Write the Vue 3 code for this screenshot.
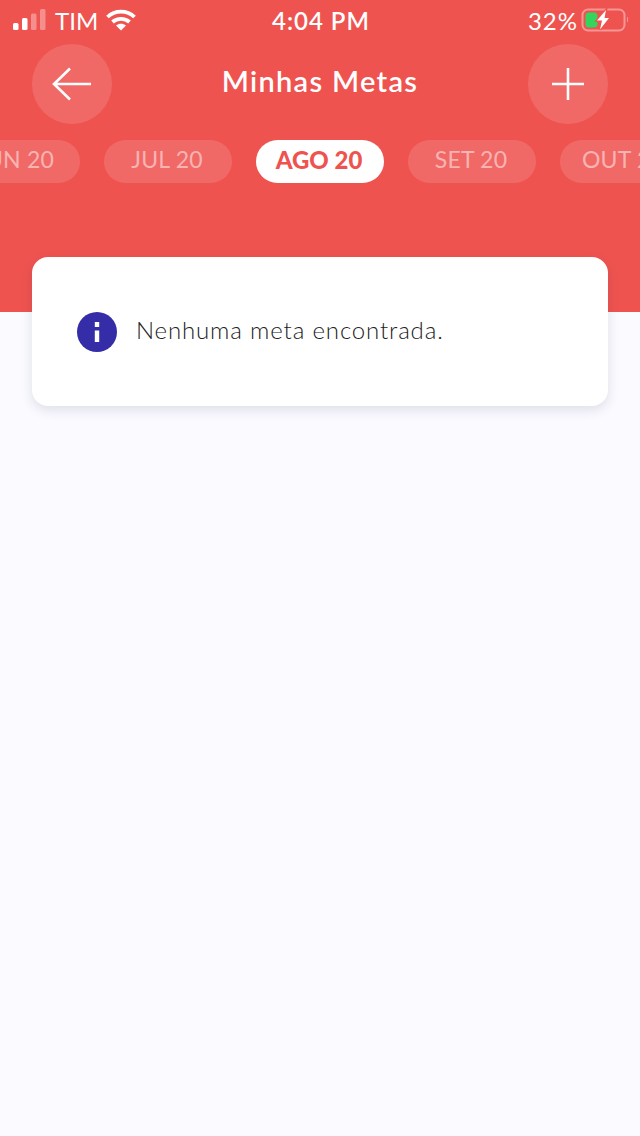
<script setup>
const months = [
  { label: 'JUN 20' },
  { label: 'JUL 20' },
  { label: 'AGO 20', active: true },
  { label: 'SET 20' },
  { label: 'OUT 20' }
]
</script>

<template>
  <div class="page">
    <header class="header">
      <div class="status">
        <div class="status-left">
          <svg class="signal" width="34" height="22" viewBox="0 0 34 22">
            <rect x="0" y="14" width="5.500" height="7" rx="1.500" fill="#fff" />
            <rect x="9" y="9" width="5.500" height="12" rx="1.500" fill="#fff" />
            <rect x="18" y="4.500" width="5.500" height="16.500" rx="1.500" fill="#fff" fill-opacity=".35" />
            <rect x="27" y="0" width="5.500" height="21" rx="1.500" fill="#fff" fill-opacity=".35" />
          </svg>
          <span class="carrier">TIM</span>
          <svg class="wifi" width="30" height="22" viewBox="0 0 30 22">
            <path d="M1.500 8C9 .8 21 .8 28.500 8" fill="none" stroke="#fff" stroke-width="3.800" />
            <path d="M6.500 13C11 8.800 19 8.800 23.500 13" fill="none" stroke="#fff" stroke-width="3.800" />
            <path d="M10 16.500C13 14 17 14 20 16.500L15 21.500Z" fill="#fff" />
          </svg>
        </div>
        <div class="time">4:04 PM</div>
        <div class="status-right">
          <span class="percent">32%</span>
          <svg class="battery" width="48" height="24" viewBox="0 0 48 24">
            <rect x="1.500" y="1.500" width="42" height="21" rx="5.500" fill="none" stroke="#fff" stroke-opacity=".4" stroke-width="2" />
            <path d="M46 8.500c1.500.6 1.500 5.400 0 6z" fill="#fff" fill-opacity=".4" />
            <rect x="4.500" y="4.500" width="12" height="15" rx="3.500" fill="#33d65c" />
            <path d="M25 2L16 12.500H21L19 21.500L28 10H23.500Z" fill="#fff" stroke="#ef5350" stroke-width="2.400" paint-order="stroke" />
          </svg>
        </div>
      </div>

      <div class="topbar">
        <button class="round-btn">
          <svg width="40" height="34" viewBox="0 0 40 34">
            <path d="M39 17H2M18 1.500L2 17L18 32.500" fill="none" stroke="#fff" stroke-width="2.600" />
          </svg>
        </button>
        <h1 class="title">Minhas Metas</h1>
        <button class="round-btn">
          <svg width="34" height="34" viewBox="0 0 34 34">
            <path d="M17 1V33M1 17H33" fill="none" stroke="#fff" stroke-width="2.600" />
          </svg>
        </button>
      </div>

      <div class="months">
        <div
          v-for="month in months"
          :key="month.label"
          class="chip"
          :class="{ active: month.active }"
        >
          {{ month.label }}
        </div>
      </div>
    </header>

    <main class="content">
      <div class="card">
        <svg class="info" width="40" height="40" viewBox="0 0 40 40">
          <circle cx="20" cy="20" r="20" fill="#352da8" />
          <rect x="17.800" y="10" width="4.400" height="5" fill="#fff" />
          <rect x="17.800" y="18.500" width="4.400" height="11.500" fill="#fff" />
        </svg>
        <span class="message">Nenhuma meta encontrada.</span>
      </div>
    </main>
  </div>
</template>

<style>
html, body {
  margin: 0;
  background: #fafaff;
}
</style>

<style scoped>
.page {
  min-height: 1136px;
  background: #fafaff;
  font-family: Lato, "Liberation Sans", sans-serif;
  overflow: hidden;
}

.header {
  height: 312px;
  background: #ef5350;
  box-sizing: border-box;
}

.status {
  height: 40px;
  display: grid;
  grid-template-columns: 1fr auto 1fr;
  align-items: center;
  color: #fff;
  font-size: 24px;
  padding: 0 11px 0 13px;
}

.status-left {
  display: flex;
  align-items: center;
}

.signal {
  margin-right: 8px;
}

.carrier {
  margin-right: 8px;
}

.time {
  font-weight: 600;
  letter-spacing: 1px;
}

.status-right {
  display: flex;
  align-items: center;
  justify-content: flex-end;
  gap: 3px;
}

.percent {
  letter-spacing: 1px;
}

.topbar {
  display: flex;
  align-items: center;
  justify-content: space-between;
  padding: 4px 32px 0;
}

.round-btn {
  width: 80px;
  height: 80px;
  border: none;
  border-radius: 50%;
  background: rgba(255, 255, 255, 0.13);
  padding: 0;
  display: flex;
  align-items: center;
  justify-content: center;
}

.title {
  margin: -8px 0 0;
  color: #fff;
  font-size: 29px;
  font-weight: 600;
  letter-spacing: 1.3px;
}

.months {
  display: flex;
  justify-content: center;
  gap: 24px;
  margin-top: 16px;
}

.chip {
  flex: none;
  width: 128px;
  height: 43px;
  box-sizing: border-box;
  padding-right: 2px;
  line-height: 39px;
  border-radius: 22px;
  text-align: center;
  font-size: 23px;
  letter-spacing: 0.2px;
  color: rgba(255, 255, 255, 0.5);
  background: rgba(255, 255, 255, 0.13);
}

.chip.active {
  background: #fff;
  color: #ef5350;
  font-size: 24px;
  font-weight: 900;
  letter-spacing: 0;
}

.content {
  padding: 0 32px;
}

.card {
  margin-top: -55px;
  height: 149px;
  box-sizing: border-box;
  padding: 0 45px;
  background: #fff;
  border-radius: 16px;
  box-shadow: 0 4px 12px rgba(40, 40, 80, 0.13);
  display: flex;
  align-items: center;
  gap: 19px;
}

.info {
  flex: none;
}

.message {
  color: #222;
  font-size: 24px;
  font-weight: 300;
  letter-spacing: 0.85px;
  margin-top: -5px;
}
</style>
